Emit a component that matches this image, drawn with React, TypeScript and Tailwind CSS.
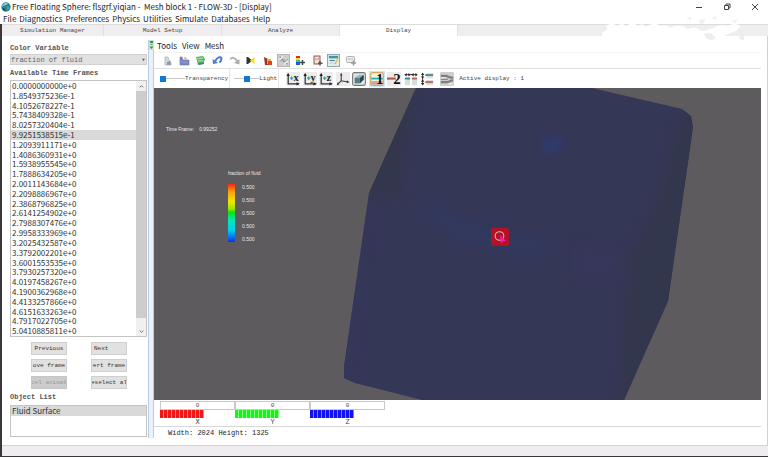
import { useState } from 'react';
import type { ReactNode } from 'react';
import clsx from 'clsx';

const MENUS = ['File', 'Diagnostics', 'Preferences', 'Physics', 'Utilities', 'Simulate', 'Databases', 'Help'];

const TABS = [
  { name: 'Simulation Manager', width: 'w-[102px]' },
  { name: 'Model Setup', width: 'w-[118px]' },
  { name: 'Analyze', width: 'w-[118px]' },
  { name: 'Display', width: 'w-[118px]' },
];

const TIME_FRAMES = [
  '0.0000000000e+0',
  '1.8549375236e-1',
  '4.1052678227e-1',
  '5.7438409328e-1',
  '8.0257320404e-1',
  '9.9251538515e-1',
  '1.2093911171e+0',
  '1.4086360931e+0',
  '1.5938955545e+0',
  '1.7888634205e+0',
  '2.0011143684e+0',
  '2.2098886967e+0',
  '2.3868796825e+0',
  '2.6141254902e+0',
  '2.7988307476e+0',
  '2.9958333969e+0',
  '3.2025432587e+0',
  '3.3792002201e+0',
  '3.6001553535e+0',
  '3.7930257320e+0',
  '4.0197458267e+0',
  '4.1900362968e+0',
  '4.4133257866e+0',
  '4.6151633263e+0',
  '4.7917022705e+0',
  '5.0410885811e+0',
];

const FRAME_BUTTONS = [
  { label: 'Previous' },
  { label: 'Next', align: 'text-left pl-[3px]' },
  { label: 'ove frame' },
  { label: 'ert frame' },
  { label: 'cel animat', disabled: true },
  { label: 'eselect al' },
];

const AXES = [
  { name: 'X', wheel: 'bg-[repeating-linear-gradient(90deg,#f01818_0px,#f01818_3px,#ff8080_3px,#ff8080_4px)]' },
  { name: 'Y', wheel: 'bg-[repeating-linear-gradient(90deg,#10f810_0px,#10f810_3px,#90ff90_3px,#90ff90_4px)]' },
  { name: 'Z', wheel: 'bg-[repeating-linear-gradient(90deg,#1010f0_0px,#1010f0_3px,#8080ff_3px,#8080ff_4px)]' },
];

// Small file / edit icons of the upper toolbar, all on a 13x13 grid
const EDIT_ICONS: { name: string; raised?: string; art: ReactNode }[] = [
  {
    name: 'Open',
    art: (
      <>
        <path d="M4 3l3 0l1 3l2 2v3H4z" fill="#d5dbe3" stroke="#a5aebb" strokeWidth=".7" />
        <path d="M6 8l3 -1l1 4H6z" fill="#8d99aa" />
      </>
    ),
  },
  {
    name: 'Capture',
    art: (
      <>
        <path d="M2 3h2l1 3h6v5H2z" fill="#7788c8" stroke="#6873a8" strokeWidth=".6" />
        <path d="M6 3l3 1l-2 2z" fill="#e0a050" />
        <path d="M3 8h7" stroke="#8f9cd6" />
      </>
    ),
  },
  {
    name: 'Book',
    art: (
      <>
        <path d="M2 3l7 -1l2 3l-2 5l-5 1z" fill="#55b862" />
        <path d="M3 5l6 -1M4 7h5" stroke="#b7e6b0" />
        <path d="M4 9l6 -1v2l-5 1z" fill="#5a76a8" />
      </>
    ),
  },
  {
    name: 'Undo',
    art: (
      <>
        <path d="M4 7.500C6 3 10 2 10.500 4.500c0 2-1 3-2 4" fill="none" stroke="#5279cf" strokeWidth="2" />
        <path d="M1.500 5l.5 5l5 -1z" fill="#5279cf" />
      </>
    ),
  },
  {
    name: 'Redo',
    art: (
      <>
        <path d="M2.500 5.500C3 3 7 3 9.500 7.500" fill="none" stroke="#b4b4b4" strokeWidth="2" />
        <path d="M11.500 5v5.500l-5.500 -1.500z" fill="#acacac" />
      </>
    ),
  },
  {
    name: 'Mirror',
    art: (
      <>
        <path d="M2.500 3h1.500l3 2.500v2L4 10H2.500z" fill="#333" />
        <path d="M10.500 3L6 6.500l4.500 3.500z" fill="#f0e020" />
      </>
    ),
  },
  {
    name: 'Probe',
    art: (
      <>
        <path d="M3 3l4 2v6H4z" fill="#9b3527" />
        <path d="M6 5h4v5H6z" fill="#ecae30" />
        <path d="M7 7h4v4H7z" fill="#d5452a" />
      </>
    ),
  },
  {
    name: 'Tools',
    raised: 'bg-[#cfcfcf] border border-[#b4b4b4]',
    art: (
      <>
        <path d="M2 2l9 9" stroke="#8b8b8b" strokeWidth="1.500" />
        <path d="M1 5c3 0 4-1 4-4M8 12c0-2 1-4 4-4" fill="none" stroke="#f4f4f4" strokeWidth="1.500" />
        <path d="M2 7c2-1 3 1 5 1s2-3 5-3" fill="none" stroke="#9c9c9c" />
      </>
    ),
  },
  {
    name: 'Color range',
    art: (
      <>
        <path d="M2 2h4v2H2z" fill="#e22" />
        <path d="M2 4h4v2H2z" fill="#fd2" />
        <path d="M2 6h4v2H2z" fill="#3c5" />
        <path d="M2 8h4v3H2z" fill="#25e" />
        <path d="M8.500 6v5M6 8.500h5" stroke="#444" strokeWidth="1.500" />
      </>
    ),
  },
  {
    name: 'Report settings',
    art: (
      <>
        <rect x="3" y="2" width="6" height="8" fill="#f2dfd6" stroke="#94564c" />
        <path d="M4 5h4" stroke="#cf8f6a" />
        <path d="M9 7v4.500M7 9.200h4.500" stroke="#555" strokeWidth="1.500" />
      </>
    ),
  },
  {
    name: 'Table',
    raised: 'bg-[#e2ecec] border border-[#93a6a8]',
    art: (
      <>
        <rect x="1" y="1" width="11" height="3" fill="#3d9aa5" />
        <path d="M1 9.500h9" stroke="#b9cfd2" />
        <path d="M2 6.500h6" stroke="#4d777c" strokeWidth="1.200" />
        <path d="M12 4l-4 7" stroke="#e9b63c" strokeWidth="1.500" />
      </>
    ),
  },
  {
    name: 'Window settings',
    art: (
      <>
        <rect x="2.500" y="2.500" width="8" height="6" rx="1" fill="#ececec" stroke="#b3b3b3" />
        <path d="M4 5h5" stroke="#bbb" />
        <path d="M9.500 6.500v5M7 9h5" stroke="#999" strokeWidth="1.500" />
      </>
    ),
  },
];

function AxisArt({ letter }: { letter: string }) {
  return (
    <>
      <rect width="16" height="16" fill="#ececec" />
      <path d="M2.500 2v11.500h12" fill="none" stroke="#333" strokeWidth="1.400" />
      <path d="M.6 4.500L2.500 1l1.900 3.500zM12 11.600l3.700 1.900l-3.700 1.900z" fill="#222" />
      <path d="M4.500 7h4M6.500 5v4" stroke="#2ba3a3" strokeWidth="1.300" />
      <text x="8.500" y="10" fontSize="12" fontWeight="bold" fontFamily="Liberation Serif, serif" fill="#222">
        {letter}
      </text>
    </>
  );
}

const VIEW_ICONS: { name: string; art: ReactNode }[] = [
  { name: 'View along x', art: <AxisArt letter="x" /> },
  { name: 'View along y', art: <AxisArt letter="y" /> },
  { name: 'View along z', art: <AxisArt letter="z" /> },
  {
    name: 'Isometric view',
    art: (
      <>
        <rect width="16" height="16" fill="#ececec" />
        <path d="M6 2v8l8 1.500M6 10l-4.500 4.500" fill="none" stroke="#444" strokeWidth="1.300" />
        <path d="M4.500 4L6 1l1.500 3zM1 15l.7-3.200L4 14zM12.500 9.500l3 2.200l-3.400 1z" fill="#444" />
      </>
    ),
  },
  {
    name: 'Perspective view',
    art: (
      <>
        <rect x=".7" y=".7" width="14.600" height="14.600" rx="2" fill="#dfe3e3" stroke="#777" strokeWidth="1.200" />
        <path d="M3 6.500l5-3.500h5.500L9 6.500z" fill="#9bbcbc" />
        <path d="M3 6.500h6V13H3z" fill="#56807f" />
        <path d="M9 6.500L13.500 3v5.500L9 13z" fill="#274a4c" />
      </>
    ),
  },
];

const LAYOUT_ICONS: { name: string; art: ReactNode }[] = [
  {
    name: 'One viewport',
    art: (
      <>
        <rect x=".8" y=".8" width="14.400" height="14.400" rx="2" fill="#f5f1dc" stroke="#dca65c" strokeWidth="1.400" />
        <path d="M1.500 10.500h13v4h-13z" fill="#c9a3a0" />
        <path d="M1.500 7.500h13" stroke="#17b5b8" strokeWidth="2" />
        <text x="7" y="13.500" fontSize="16" fontWeight="bold" fontFamily="Liberation Serif, serif" fill="#111">1</text>
      </>
    ),
  },
  {
    name: 'Two viewports',
    art: (
      <>
        <rect width="16" height="16" fill="#ececec" />
        <path d="M0 7.500h10" stroke="#b35b52" strokeWidth="2.500" />
        <text x="7" y="13.500" fontSize="17" fontWeight="bold" fontFamily="Liberation Serif, serif" fill="#111">2</text>
      </>
    ),
  },
  {
    name: 'Tile horizontally',
    art: (
      <>
        <path d="M1 6h6v9H1zM9 6h6v9H9z" fill="#d8dedd" />
        <path d="M1 7.500h6" stroke="#3c8783" strokeWidth="2" />
        <path d="M9 7.500h6" stroke="#b76258" strokeWidth="2" />
        <path d="M1 3h14" stroke="#222" strokeWidth="1" />
        <path d="M3 1v4L.5 3zM5 1v4L7.500 3zM11 1v4L8.500 3zM13 1v4L15.500 3z" fill="#222" />
      </>
    ),
  },
  {
    name: 'Tile vertically',
    art: (
      <>
        <path d="M7 1h8v6H7zM7 9h8v6H7z" fill="#dbdedd" />
        <path d="M6 3.500h9" stroke="#3c8783" strokeWidth="2" />
        <path d="M6 11.500h9" stroke="#b76258" strokeWidth="2" />
        <path d="M3 1v14" stroke="#222" strokeWidth="1" />
        <path d="M1 3.500h4L3 1zM1 5h4L3 7.500zM1 11h4L3 8.500zM1 12.500h4L3 15z" fill="#222" />
      </>
    ),
  },
];

function AppLogo() {
  return (
    <svg viewBox="0 0 16 16" className="size-2.5 shrink-0" aria-hidden="true">
      <circle cx="8" cy="8" r="7.500" fill="#2f7f95" />
      <path d="M2 5c3-4 8-4 10-2c-3 0-4 2-7 2.500S4 8 2 8z" fill="#8fd0c4" />
      <path d="M8 7c3-1 6 0 6 2s-2 4-4 5c-2-2 1-4-2-7z" fill="#3fa3a0" />
      <path d="M3 10l4 4" stroke="#16425c" strokeWidth="2" />
    </svg>
  );
}

function TitleBar() {
  return (
    <header className="flex h-[13px] items-center gap-px pl-px pr-2">
      <AppLogo />
      <h1 className="flex-1 whitespace-pre text-[8px] leading-3">
        {'Free Floating Sphere: flsgrf.yiqian -  Mesh block 1 - FLOW-3D - [Display]'}
      </h1>
      <div className="flex gap-[18px]">
        <button aria-label="Minimize" className="size-2.5">
          <svg viewBox="0 0 10 10"><path d="M2 5.500h6" stroke="#444" /></svg>
        </button>
        <button aria-label="Restore" className="size-2.5">
          <svg viewBox="0 0 10 10">
            <path d="M2.500 3.500h4v4h-4zM4 3.500v-1.500h4v4h-1.500" fill="none" stroke="#444" />
          </svg>
        </button>
        <button aria-label="Close" className="size-2.5">
          <svg viewBox="0 0 10 10"><path d="M2 2l6 6M8 2l-6 6" stroke="#444" /></svg>
        </button>
      </div>
    </header>
  );
}

// White brush marks lying over the right end of the tab strip
function Smudge() {
  return (
    <svg viewBox="0 0 150 30" className="absolute right-4 -top-3 h-[30px] w-[150px]" aria-hidden="true">
      <path
        d="M0 20q8-4 4-7q6-5 11 0q5-4 9 0q7-5 12 0q4-4 8 1q8-6 14-1q6-3 10 2q9-5 18 1q8-4 13 2q8-1 12-3q8-5 14-2q9-4 14 0l-5 5q-9 3-14 6q8 3 4 5q-12 3-22-1q-14 4-26 1q-18-2-32 0q-22-2-44-1z"
        fill="#fff"
      />
      <path d="M102 21q6-3 10 2q4 2-2 4q-6 0-8-6zM138 22l4 0v5l-5-1zM122 24l3 3" fill="#efedf0" />
      <path d="M84 5l5-1v3zM97 7l6-1l-1 4l-4 1zM110 5l4-2v4zM130 8l6-2l-3 4z" fill="#f1eff2" />
    </svg>
  );
}

function TabStrip() {
  return (
    <nav className="relative flex h-3 border-t border-[#dcdcdc] bg-[#efedf0] font-['Liberation_Mono',monospace] text-[6px]">
      {TABS.map(tab => (
        <button
          key={tab.name}
          className={clsx(
            'h-full border-r border-[#e2e0e3] text-center text-[#444]',
            tab.width,
            tab.name === 'Display' && 'bg-white'
          )}
        >
          {tab.name}
        </button>
      ))}
      <Smudge />
    </nav>
  );
}

function Sidebar() {
  const [selected, setSelected] = useState('9.9251538515e-1');

  return (
    <aside className="flex w-[146px] shrink-0 flex-col pb-2 pl-2 pr-px pt-[7px] font-['Liberation_Mono',monospace] text-[7px] leading-[10px] text-[#333]">
      <label htmlFor="variable" className="mb-px font-bold text-[#555]">Color Variable</label>
      <div className="relative">
        <select
          id="variable"
          className="block h-[11px] w-full appearance-none border border-[#d0d0d0] bg-[#e1e1e1] text-[7px] text-[#666]"
        >
          <option>fraction of fluid</option>
        </select>
        <svg viewBox="0 0 4 4" className="pointer-events-none absolute right-[2px] top-1 size-[3px]">
          <path d="M0 1h4L2 4z" fill="#555" />
        </svg>
      </div>
      <h2 id="frames" className="mb-[2px] mt-[3px] font-bold text-[#555]">Available Time Frames</h2>

      <div className="flex min-h-0 flex-1 border border-[#c4c4c4]">
        <ul
          role="listbox"
          aria-labelledby="frames"
          className="flex flex-1 flex-col font-['Noto_Sans_CJK_SC',sans-serif] text-[8px]"
        >
          {TIME_FRAMES.map(frame => (
            <li
              key={frame}
              role="option"
              aria-selected={frame === selected}
              onClick={() => setSelected(frame)}
              className={clsx(
                'flex min-h-0 flex-1 items-center pl-px',
                frame === selected && 'bg-[#d9d9d9]'
              )}
            >
              {frame}
            </li>
          ))}
        </ul>
        <div className="flex w-2.5 flex-col bg-[#f0f0f0]">
          <button aria-label="Scroll up" className="flex h-2.5 items-center justify-center">
            <svg viewBox="0 0 6 6" className="size-[5px]"><path d="M1 4l2-2l2 2" fill="none" stroke="#555" /></svg>
          </button>
          <div className="flex-1 bg-[#cdcdcd]" />
          <div className="h-2" />
          <button aria-label="Scroll down" className="flex h-2.5 items-center justify-center">
            <svg viewBox="0 0 6 6" className="size-[5px]"><path d="M1 2l2 2l2-2" fill="none" stroke="#555" /></svg>
          </button>
        </div>
      </div>

      <div className="ml-[21px] mt-[5px] grid w-24 grid-cols-2 gap-x-6 gap-y-1">
        {FRAME_BUTTONS.map(({ label, align, disabled }) => (
          <button
            key={label}
            disabled={disabled}
            className={clsx(
              'h-[13px] overflow-hidden whitespace-nowrap text-[6px] outline -outline-offset-1',
              align ?? 'text-center',
              disabled ? 'bg-[#cccccc] text-[#999] outline-[#c6c6c6]' : 'bg-[#e1e1e1] outline-[#cfcfcf]'
            )}
          >
            {label}
          </button>
        ))}
      </div>

      <h2 id="objects" className="my-[3px] font-bold text-[#555]">Object List</h2>
      <ul
        role="listbox"
        aria-labelledby="objects"
        className="h-8 border border-[#c4c4c4] font-['Noto_Sans_CJK_SC',sans-serif] text-[8px]"
      >
        <li role="option" aria-selected="true" className="bg-[#d9d9d9] pl-px">Fluid Surface</li>
      </ul>
    </aside>
  );
}

function Splitter() {
  return (
    <div className="mb-[7px] mt-1 flex w-[6px] shrink-0 flex-col items-center border-x border-[#b9cce4] bg-[#eaf1fa]">
      <svg viewBox="0 0 5 10" className="h-2.5 w-[5px]" aria-hidden="true">
        <rect width="5" height="10" fill="#cfe0d5" />
        <path d="M1 1h3v2H1zM1 4l1.500 1L4 4M.5 6.500h4L2.500 9z" fill="#2e9a4d" />
      </svg>
    </div>
  );
}

function IconButton({ name, className, grid, children }: { name: string; className?: string; grid: string; children: ReactNode }) {
  return (
    <button aria-label={name} className={clsx('shrink-0', className)}>
      <svg viewBox={grid} className="block size-full">{children}</svg>
    </button>
  );
}

function Slider({ label, value, className }: { label: string; value: number; className: string }) {
  return (
    <label className="flex h-full items-center border-r border-[#e6e6e6] pr-px">
      <input
        type="range"
        defaultValue={value}
        className={clsx(
          'h-[6px] appearance-none bg-[linear-gradient(#c8c8c8,#c8c8c8)] bg-[length:100%_1px] bg-center bg-no-repeat [&::-webkit-slider-thumb]:size-[6px] [&::-webkit-slider-thumb]:appearance-none [&::-webkit-slider-thumb]:bg-[#0f78d4]',
          className
        )}
      />
      {label}
    </label>
  );
}

function Toolbars() {
  return (
    <>
      <nav className="flex gap-[5px] pb-px pl-[3px] pt-1 text-[8px] leading-[11px]">
        <button>Tools</button>
        <button>View</button>
        <button>Mesh</button>
      </nav>
      <div className="h-[17px] border-b border-t border-b-[#e0e0e0] border-t-[#f4f4f4]">
        <div className="ml-[7px] flex h-full w-[196px] items-center justify-between">
          {EDIT_ICONS.map(icon => (
            <IconButton key={icon.name} name={icon.name} grid="0 0 13 13" className={clsx('size-[13px]', icon.raised)}>
              {icon.art}
            </IconButton>
          ))}
        </div>
      </div>
      <div className="flex h-[19px] items-center pl-[6px] font-['Liberation_Mono',monospace] text-[6px] text-[#444]">
        <Slider label="Transparency" value={0} className="w-[25px]" />
        <div className="w-1" />
        <Slider label="Light" value={50} className="w-[25px]" />
        <div className="ml-[7px] flex w-20 justify-between">
          {VIEW_ICONS.map(icon => (
            <IconButton key={icon.name} name={icon.name} grid="0 0 16 16" className="size-[14px]">
              {icon.art}
            </IconButton>
          ))}
        </div>
        <div className="mx-[3px] flex w-[66px] justify-between">
          {LAYOUT_ICONS.map((icon, i) => (
            <IconButton
              key={icon.name}
              name={icon.name}
              grid="0 0 16 16"
              className={clsx('size-4 p-px', i === 0 && 'bg-[#cfe6f8]')}
            >
              {icon.art}
            </IconButton>
          ))}
        </div>
        <IconButton name="Link displays" grid="0 0 16 16" className="ml-[2px] size-[14px]">
          <rect width="16" height="16" rx="1" fill="#cfcfcf" />
          <path d="M1 4.500h6c2 0 2 2 8 2M1 11.500h8c2 0 2-2 6-2" fill="none" stroke="#808080" strokeWidth="2.500" />
          <path d="M1 8.500h8" stroke="#8c8c8c" strokeWidth="1.500" />
          <path d="M1 6.500h5M9 13.500h6" stroke="#f2f2f2" />
        </IconButton>
        <span className="ml-[5px]">Active display : 1</span>
      </div>
    </>
  );
}

function Viewport() {
  return (
    <section className="relative min-h-0 flex-1 overflow-hidden bg-[#5d5b5d] font-['Liberation_Sans',sans-serif] text-[5px] leading-[6px] text-[#e8e8e8]">
      <svg viewBox="0 0 607 312" preserveAspectRatio="xMidYMid slice" className="absolute inset-0 size-full">
        <defs>
          <filter id="soft" x="-50%" y="-50%" width="200%" height="200%" colorInterpolationFilters="sRGB">
            <feGaussianBlur stdDeviation="5" />
          </filter>
          <filter id="spot" x="-50%" y="-50%" width="200%" height="200%" colorInterpolationFilters="sRGB">
            <feGaussianBlur stdDeviation="2" />
          </filter>
          <clipPath id="body">
            <path d="M262 0H438L528 21L537 28L539 39L514 213L470 312H268L201 295L190 290V279L215 105z" />
          </clipPath>
        </defs>
        <g clipPath="url(#body)">
          <rect x="180" width="370" height="312" fill="#353757" />
          <g filter="url(#soft)">
            <path d="M256-10L205 106L246 110L262-10z" fill="#33374d" />
            <path d="M560 0L525 30L505 110L474 170L464 320H490L530 210z" fill="#33374d" />
            <path d="M180 290L205 120L214 120L198 300z" fill="#34375a" />
            <path d="M255 115L300 124L340 138L412 154L380 168L310 160z" fill="#32395d" />
            <path d="M420 155L466 160L462 195L420 190z" fill="#36375a" />
          </g>
          <path d="M388 50l14-2l10 2l-8 14l-9 3l-8-4z" fill="#303a68" filter="url(#spot)" />
        </g>
        <rect x="337" y="140" width="18" height="18" rx="2" fill="#b31224" />
        <circle cx="345.500" cy="148" r="4.300" fill="none" stroke="#e5b5bd" strokeWidth="1.100" />
        <path d="M346 147l6 6l-3 .5l-2 2z" fill="#f219b9" />
      </svg>
      <p className="relative flex gap-[5px] pl-3 pt-[38px]"><span>Time Frame:</span><span>0.99252</span></p>
      <div className="relative ml-[74px] mt-[38px]">
        <h3>fraction of fluid</h3>
        <div className="mt-[7px] flex gap-[7px]">
          <div className="h-[59px] w-[7px] bg-[linear-gradient(#f21c0c,#f8a010_15%,#f0e800_32%,#a0e800_43%,#10e010_50%,#00e8b0_62%,#00d0f0_80%,#1030e8)]" />
          <div className="flex flex-col gap-[7px] pt-px">
            {[1, 2, 3, 4, 5].map(n => (
              <span key={n}>0.500</span>
            ))}
          </div>
        </div>
      </div>
    </section>
  );
}

function AxisWheels() {
  return (
    <div className="flex border-b border-[#d8d8d8] pl-[6px] pt-px font-['Liberation_Mono',monospace] text-[7px] text-[#444]">
      {AXES.map(axis => (
        <label key={axis.name} className="flex w-[75px] flex-col">
          <input
            defaultValue="0"
            className="h-[9px] w-full border border-[#c9c9c9] bg-white text-center text-[6px] leading-[7px]"
          />
          <span className={clsx('h-2 w-11', axis.wheel)} />
          <span className="text-center leading-[8px]">{axis.name}</span>
        </label>
      ))}
    </div>
  );
}

export default function App() {
  return (
    <div className="flex h-screen min-h-[457px] flex-col bg-white font-['Noto_Sans_CJK_SC',sans-serif] text-[#222]">
      <TitleBar />
      <nav className="flex h-[11px] items-center gap-[3px] pl-[3px] text-[8px] leading-[11px]">
        {MENUS.map(menu => (
          <button key={menu}>{menu}</button>
        ))}
      </nav>
      <div className="flex min-h-0 flex-1 flex-col border-l-2 border-[#3a363a]">
        <TabStrip />
        <div className="flex min-h-0 flex-1 border-r border-[#d0d0d0]">
          <Sidebar />
          <Splitter />
          <main className="mr-[6px] flex min-w-0 flex-1 flex-col">
            <Toolbars />
            <Viewport />
            <AxisWheels />
            <p className="h-[18px] pl-3.5 pt-px font-['Liberation_Mono',monospace] text-[7px] leading-[10px] text-[#222]">
              Width: 2024 Height: 1325
            </p>
          </main>
        </div>
        <footer className="h-3 border-y border-b-[#3a363a] border-t-[#d4d4d4] bg-[#efedf0]" />
      </div>
    </div>
  );
}
